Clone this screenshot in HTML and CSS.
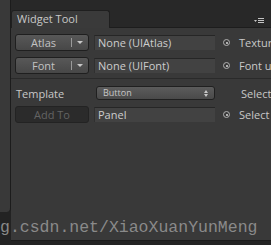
FILE: index.html
```html
<!DOCTYPE html>
<html>
<head>
<meta charset="utf-8">
<link rel="stylesheet" href="styles.css">
</head>
<body>
<div class="wrap">
  <div class="side"></div>
  <div class="main">
    <div class="header">
      <div class="tab">Widget Tool</div>
      <div class="menu">
        <svg width="10" height="6" viewBox="0 0 10 6"><path d="M0 2h3l-1.5 2z" fill="#c4c4c4"/><path d="M4 0.5h6M4 2.5h6M4 4.5h6" stroke="#c4c4c4" stroke-width="1"/></svg>
      </div>
    </div>
    <div class="content">
      <div class="row">
        <div class="btn split"><span class="btn-label">Atlas</span><span class="div"></span><span class="arrow"></span></div>
        <div class="field">None (UIAtlas)</div>
        <span class="picker"></span>
        <span class="hint">Texture</span>
      </div>
      <div class="row">
        <div class="btn split"><span class="btn-label">Font</span><span class="div"></span><span class="arrow"></span></div>
        <div class="field">None (UIFont)</div>
        <span class="picker"></span>
        <span class="hint">Font used</span>
      </div>
      <div class="sep"></div>
      <div class="row row-t">
        <div class="label">Template</div>
        <div class="popup">Button<span class="updown"></span></div>
        <span class="hint hint-s">Select</span>
      </div>
      <div class="row">
        <div class="btn disabled">Add To</div>
        <div class="field">Panel</div>
        <span class="picker"></span>
        <span class="hint">Select</span>
      </div>
    </div>
  </div>
</div>
<div class="watermark">g.csdn.net/XiaoXuanYunMeng</div>
</body>
</html>
```
FILE: styles.css
```css
html, body {
  margin: 0;
  padding: 0;
  width: 271px;
  height: 245px;
  overflow: hidden;
  background: #232323;
  font-family: "Open Sans", "DejaVu Sans", sans-serif;
  font-size: 11px;
  position: relative;
}
.wrap {
  display: flex;
  align-items: flex-start;
}
.side {
  width: 11px;
  height: 212px;
  background: #393939;
  border-right: 1px solid #1c1c1c;
  border-bottom-right-radius: 4px;
  box-sizing: border-box;
  flex: none;
}
.main {
  flex: 1;
  height: 241px;
  background: #393939;
  border-bottom: 1px solid #1b1b1b;
  box-sizing: border-box;
  overflow: hidden;
}
.header {
  height: 28px;
  background: #282828;
  border-bottom: 1px solid #1d1d1d;
  box-sizing: border-box;
  display: flex;
  align-items: flex-end;
  justify-content: space-between;
}
.tab {
  width: 99px;
  height: 18px;
  margin-bottom: -1px;
  background: #3a3a3a;
  border: 1px solid #1f1f1f;
  border-bottom: none;
  border-radius: 3px 3px 0 0;
  box-sizing: border-box;
  color: #c8c8c8;
  padding-left: 5px;
  line-height: 16px;
}
.menu {
  margin-right: 7px;
  margin-bottom: 3px;
  display: flex;
}
.content {
  padding: 6px 0 0 4px;
  display: flex;
  flex-direction: column;
}
.row {
  display: flex;
  align-items: center;
  height: 17px;
  margin-bottom: 6px;
  white-space: nowrap;
}
.btn {
  width: 74px;
  height: 17px;
  box-sizing: border-box;
  border: 1px solid #1f1f1f;
  border-radius: 3px;
  background: linear-gradient(#585858, #474747);
  color: #c2c2c2;
  display: flex;
  align-items: center;
  justify-content: center;
  flex: none;
}
.split { justify-content: flex-start; }
.btn-label {
  width: 55px;
  text-align: center;
}
.div {
  width: 1px;
  height: 9px;
  background: #9a9a9a;
}
.arrow {
  margin-left: 5px;
  width: 0;
  height: 0;
  border-left: 3px solid transparent;
  border-right: 3px solid transparent;
  border-top: 3px solid #c8c8c8;
}
.field {
  margin-left: 5px;
  width: 121px;
  height: 15px;
  box-sizing: border-box;
  background: #424242;
  border-top: 1px solid #262626;
  border-left: 1px solid #303030;
  color: #cdcdcd;
  padding-left: 3px;
  line-height: 14px;
  flex: none;
}
.picker {
  margin-left: 8px;
  width: 7px;
  height: 7px;
  box-sizing: border-box;
  border: 1px solid #b0b0b0;
  border-radius: 50%;
  position: relative;
  flex: none;
}
.picker::after {
  content: "";
  position: absolute;
  left: 1.5px;
  top: 1.5px;
  width: 2px;
  height: 2px;
  background: #b0b0b0;
}
.hint {
  margin-left: 9px;
  color: #c8c8c8;
}
.sep {
  height: 1px;
  background: #2a2a2a;
  margin: -2px 0 7px -4px;
}
.row-t { height: 14px; margin-bottom: 6px; }
.label {
  width: 80px;
  margin-left: 1px;
  color: #c8c8c8;
  flex: none;
}
.popup {
  width: 119px;
  height: 14px;
  box-sizing: border-box;
  border: 1px solid #202020;
  border-radius: 3px;
  background: linear-gradient(#5c5c5c, #4a4a4a);
  color: #c8c8c8;
  font-size: 9px;
  padding-left: 6px;
  line-height: 12px;
  position: relative;
  flex: none;
}
.updown {
  position: absolute;
  right: 6px;
  top: 3px;
  width: 0;
  height: 0;
  border-left: 2px solid transparent;
  border-right: 2px solid transparent;
  border-bottom: 3px solid #c8c8c8;
}
.updown::after {
  content: "";
  position: absolute;
  left: -2px;
  top: 4px;
  border-left: 2px solid transparent;
  border-right: 2px solid transparent;
  border-top: 3px solid #c8c8c8;
}
.hint-s { margin-left: 26px; }
.disabled {
  background: #2b2b2b;
  border-color: #232323;
  color: #636363;
}
.watermark {
  position: absolute;
  left: 0;
  top: 218px;
  font-family: "Liberation Mono", monospace;
  font-size: 16.5px;
  color: #8a8a8a;
  letter-spacing: 0;
  white-space: nowrap;
}
```
